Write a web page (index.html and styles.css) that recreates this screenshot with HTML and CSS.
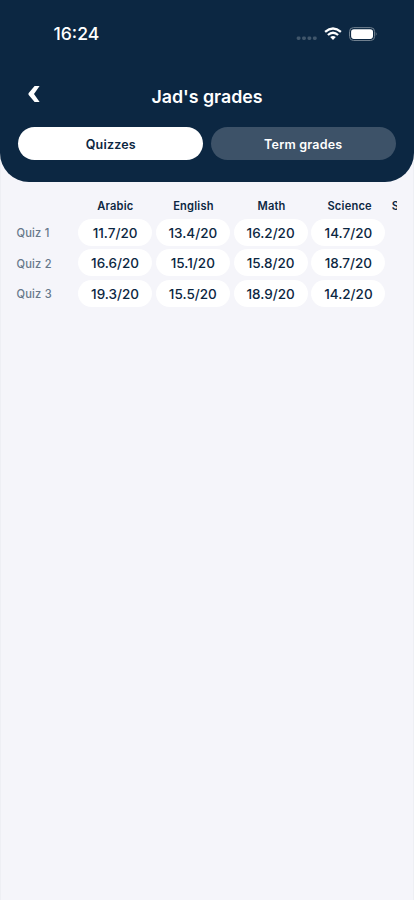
FILE: index.html
```html
<!DOCTYPE html>
<html lang="en">
<head>
<meta charset="utf-8">
<meta name="viewport" content="width=device-width, initial-scale=1">
<title>Jad's grades</title>
<link rel="stylesheet" href="styles.css">
</head>
<body>
<header class="header">
  <div class="status">
    <span class="time">16:24</span>
    <svg class="status-icons" width="80" height="16" viewBox="0 0 80 16" aria-hidden="true">
      <g fill="#40566b"><rect x="0.7" y="9.4" width="3.8" height="3.6" rx="1.4"/><rect x="6.1" y="9.4" width="3.8" height="3.6" rx="1.4"/><rect x="11.5" y="9.4" width="3.8" height="3.6" rx="1.4"/><rect x="16.9" y="9.4" width="3.8" height="3.6" rx="1.4"/></g>
      <g fill="none" stroke="#fff" stroke-width="2.3"><path d="M29.1 4.8Q37 -1.8 44.9 4.8"/><path d="M31.9 8Q37 3.6 42.1 8"/></g>
      <path d="M34.2 10Q37 7.8 39.8 10L37 13Z" fill="#fff"/>
      <rect x="53.5" y="0.6" width="25.1" height="12.9" rx="4" fill="none" stroke="#70808f"/>
      <rect x="55.1" y="2.2" width="21.9" height="9.7" rx="2.8" fill="#fff"/>
      <path d="M79.8 5Q81.6 7 79.8 9Z" fill="#70808f"/>
    </svg>
  </div>
  <div class="title-row">
    <svg class="back" width="12" height="16" viewBox="0 0 12 16" aria-label="Back"><path d="M6.6 0H11.6L6 8L11.6 16H6.6L.5 8.8V7.2Z" fill="#fff"/></svg>
    <h1 class="title">Jad's grades</h1>
  </div>
  <nav class="tabs">
    <button class="tab tab-active">Quizzes</button>
    <button class="tab">Term grades</button>
  </nav>
</header>
<main class="grades">
  <div class="labels">
    <span>Quiz 1</span><span>Quiz 2</span><span>Quiz 3</span>
  </div>
  <div class="scroller">
    <div class="subjects"><span>Arabic</span><span>English</span><span>Math</span><span>Science</span><span class="next">S</span></div>
    <div class="scores">
      <span>11.7/20</span><span>13.4/20</span><span>16.2/20</span><span>14.7/20</span>
      <span>16.6/20</span><span>15.1/20</span><span>15.8/20</span><span>18.7/20</span>
      <span>19.3/20</span><span>15.5/20</span><span>18.9/20</span><span>14.2/20</span>
    </div>
  </div>
</main>
</body>
</html>
```
FILE: styles.css
```css
* { box-sizing: border-box; }
body {
  margin: 0;
  min-height: 900px;
  background: #f5f5fa;
  box-shadow: inset 1px 0 #eeeff4, inset -1px 0 #eeeff4;
  color: #0c2742;
  font-family: Inter, "Liberation Sans", sans-serif;
}
.header {
  height: 181.5px;
  padding: 22px 18.3px 0;
  background: #0c2742;
  border-radius: 0 0 29px 29px;
  color: #fff;
}
.status {
  display: flex;
  justify-content: space-between;
  height: 64px;
  padding: 0 19.7px 0 35.2px;
}
.time { font-size: 17.6px; font-weight: 500; line-height: 24px; }
.status-icons { margin-top: 5px; overflow: visible; }
.title-row {
  display: grid;
  grid-template-columns: 30px 1fr 30px;
  height: 41.3px;
}
.back { margin-left: 10.2px; }
.title { margin: 0; font-size: 17.8px; font-weight: 600; line-height: 22px; text-align: center; }
.tabs { display: grid; grid-template-columns: 1fr 1fr; gap: 7.4px; }
.tab {
  height: 33.2px;
  padding: 2px 0 0;
  border: 0;
  border-radius: 17px;
  background: #3d5268;
  color: #fff;
  font: 600 12.5px/31px Inter, "Liberation Sans", sans-serif;
  letter-spacing: .2px;
}
.tab-active { background: #fff; color: #0c2742; }
.grades {
  display: grid;
  grid-template-columns: 61.5px 1fr;
  padding: 16px 17px 0 16.5px;
}
.labels {
  display: grid;
  grid-auto-rows: 27px;
  align-content: start;
  row-gap: 3.5px;
  padding-top: 21.5px;
  color: #66788a;
  font-size: 11.1px;
  font-weight: 500;
  line-height: 28px;
  letter-spacing: .2px;
}
.scroller { overflow: hidden; }
.subjects {
  display: grid;
  grid-template-columns: repeat(5, 78.1px);
  height: 21.5px;
  margin-left: -1.7px;
  font-size: 11.1px;
  font-weight: 600;
  line-height: 17px;
  letter-spacing: .2px;
  text-align: center;
}
.subjects .next { padding-left: 3px; text-align: left; }
.scores {
  display: grid;
  grid-template-columns: repeat(4, 74.1px);
  grid-auto-rows: 27px;
  gap: 3.4px 3.7px;
}
.scores span {
  border-radius: 14px;
  background: #fff;
  font-size: 13.5px;
  font-weight: 550;
  line-height: 28px;
  text-align: center;
}
```
